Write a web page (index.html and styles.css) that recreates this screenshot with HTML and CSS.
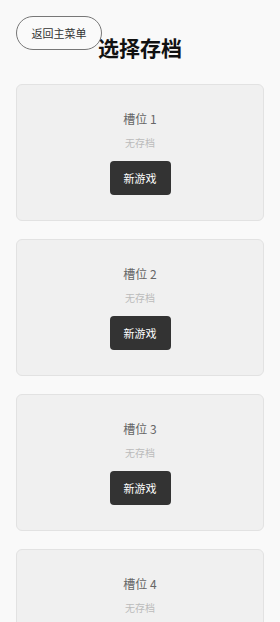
FILE: index.html
```html
<!DOCTYPE html>
<html lang="zh">
<head>
  <meta charset="UTF-8" />
  <meta name="viewport" content="width=device-width, initial-scale=1.0" />
  <title>选择存档</title>
  <link rel="stylesheet" href="styles.css">
</head>
<body>
  <div class="header">
    <button class="back-btn">返回主菜单</button>
    <h1>选择存档</h1>
  </div>

  <div class="slot-list">
    <div class="slot-card">
      <div class="slot-name">槽位 1</div>
      <div class="slot-info">无存档</div>
      <button class="new-game-btn">新游戏</button>
    </div>
    <div class="slot-card">
      <div class="slot-name">槽位 2</div>
      <div class="slot-info">无存档</div>
      <button class="new-game-btn">新游戏</button>
    </div>
    <div class="slot-card">
      <div class="slot-name">槽位 3</div>
      <div class="slot-info">无存档</div>
      <button class="new-game-btn">新游戏</button>
    </div>
    <div class="slot-card">
      <div class="slot-name">槽位 4</div>
      <div class="slot-info">无存档</div>
      <button class="new-game-btn">新游戏</button>
    </div>
  </div>
</body>
</html>
```

FILE: styles.css
```css
* {
  box-sizing: border-box;
  margin: 0;
  padding: 0;
}
body {
  font-family: "Noto Sans CJK SC", "Noto Sans", sans-serif;
  background-color: #f9f9f9;
  color: #222;
  padding: 16px;
}
.header {
  position: relative;
  padding-top: 17px;
  margin-bottom: 23px;
}
h1 {
  font-size: 21px;
  line-height: 28px;
  font-weight: 700;
  text-align: center;
  color: #111;
}
.back-btn {
  position: absolute;
  top: 0;
  left: 0;
  width: 86px;
  height: 34px;
  border: 1px solid #777;
  border-radius: 17px;
  background: #fafafa;
  font-family: inherit;
  font-size: 11px;
  color: #333;
  cursor: pointer;
}
.slot-list {
  display: flex;
  flex-direction: column;
  gap: 18px;
}
.slot-card {
  height: 137px;
  background: #f0f0f0;
  border: 1px solid #e2e2e2;
  border-radius: 6px;
  display: flex;
  flex-direction: column;
  align-items: center;
  padding-top: 26px;
}
.slot-name {
  font-size: 12px;
  line-height: 16px;
  color: #666;
}
.slot-info {
  font-size: 10px;
  line-height: 14px;
  color: #bbb;
  margin-top: 9px;
}
.new-game-btn {
  margin-top: 11px;
  width: 61px;
  height: 34px;
  border: none;
  border-radius: 4px;
  background: #333;
  color: #fff;
  font-family: inherit;
  font-size: 11px;
  cursor: pointer;
}
```
